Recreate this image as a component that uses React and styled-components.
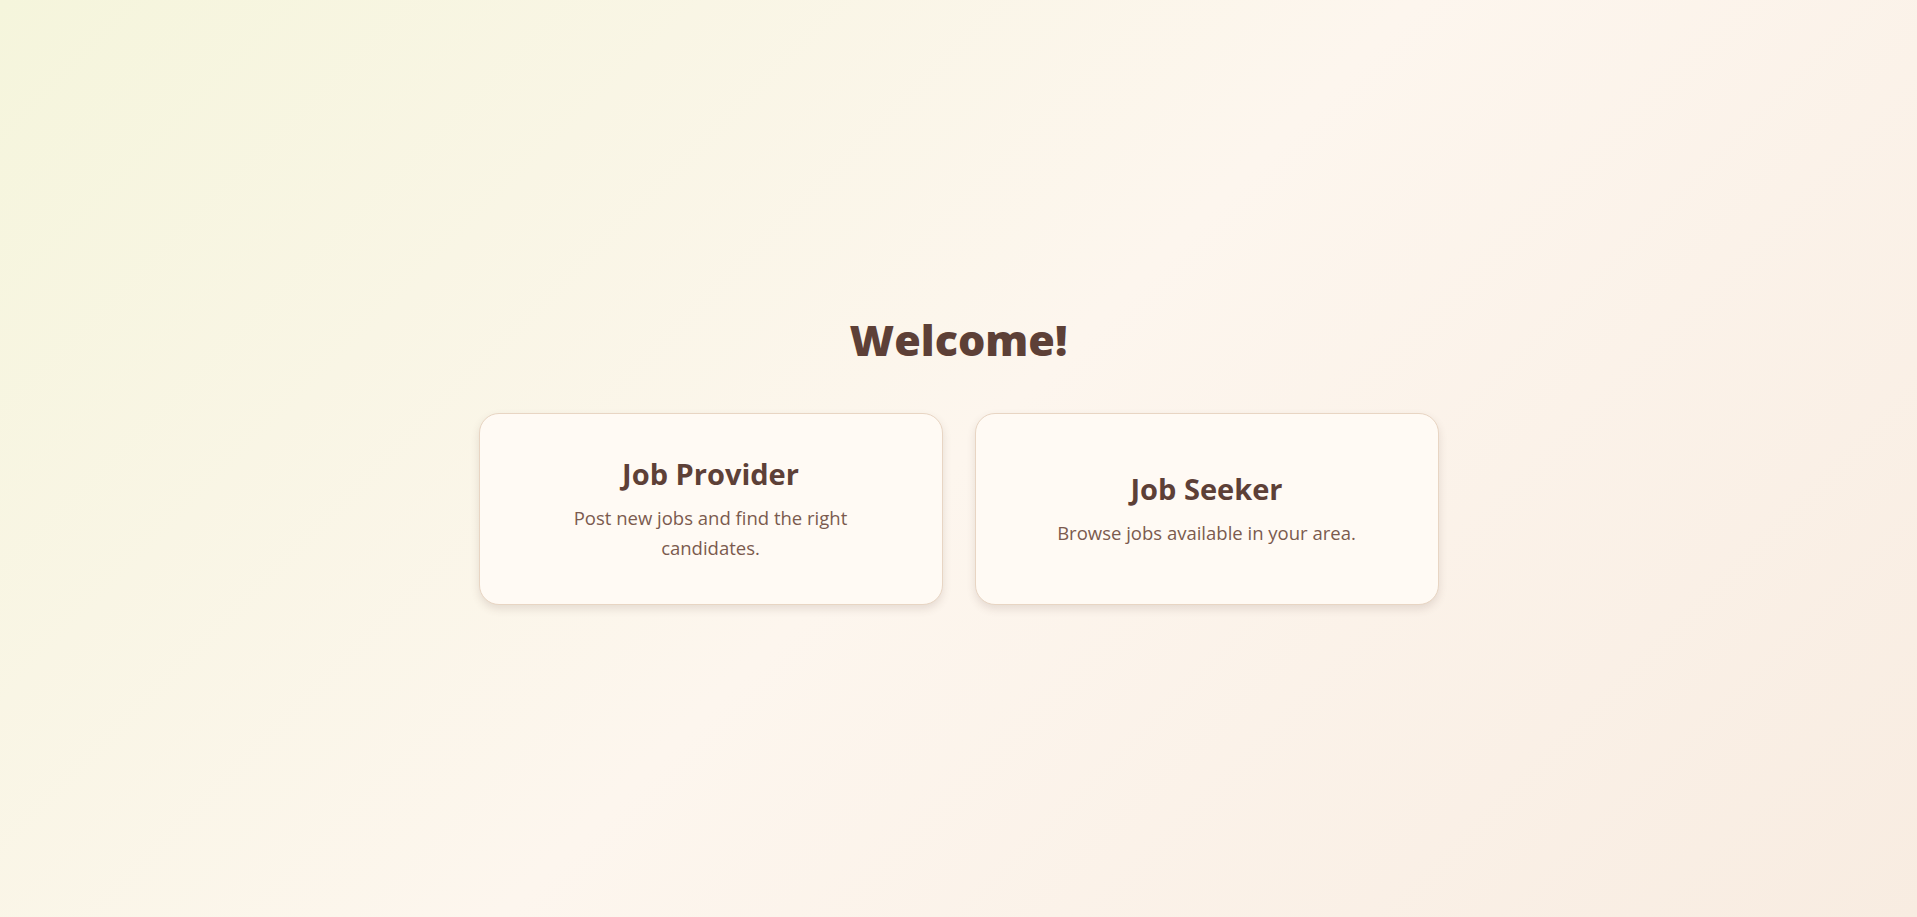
import styled, { createGlobalStyle } from "styled-components";

const GlobalStyle = createGlobalStyle`
  * {
    box-sizing: border-box;
  }

  body {
    margin: 0;
    font-family: "Open Sans", "Noto Sans", "Liberation Sans", sans-serif;
    color: #5d4037;
  }
`;

/* 페이지 전체 */
const Page = styled.div`
  min-height: 100vh;
  display: flex;
  flex-direction: column;
  align-items: center;
  justify-content: center;
  background: linear-gradient(135deg, #f5f5dc 0%, #fdf6ee 50%, #f8ece1 100%);
`;

/* 환영 문구 */
const Title = styled.h1`
  margin: 0 0 45px;
  font-size: 43px;
  font-weight: 800;
  line-height: 1.3;
  color: #5d4037;
`;

/* 카드 두 개 */
const CardRow = styled.div`
  display: grid;
  grid-template-columns: repeat(2, 464px);
  gap: 32px;
`;

const Card = styled.button`
  display: flex;
  flex-direction: column;
  align-items: center;
  justify-content: center;
  padding: 41px 48px;
  background: #fffaf4;
  border: 1px solid #e8d5c3;
  border-radius: 20px;
  box-shadow: 0 4px 8px rgba(93, 64, 55, 0.14);
  font-family: inherit;
  text-align: center;
  cursor: pointer;
`;

const CardTitle = styled.h2`
  margin: 0 0 10px;
  font-size: 29px;
  font-weight: 700;
  line-height: 1.3;
  color: #5d4037;
`;

const CardText = styled.p`
  margin: 0;
  max-width: 300px;
  font-size: 18.5px;
  line-height: 30px;
  color: #7b5a4e;
`;

function App() {
  return (
    <Page>
      <GlobalStyle />
      <Title>Welcome!</Title>
      <CardRow>
        <Card>
          <CardTitle>Job Provider</CardTitle>
          <CardText>Post new jobs and find the right candidates.</CardText>
        </Card>
        <Card>
          <CardTitle>Job Seeker</CardTitle>
          <CardText>Browse jobs available in your area.</CardText>
        </Card>
      </CardRow>
    </Page>
  );
}

export default App;
